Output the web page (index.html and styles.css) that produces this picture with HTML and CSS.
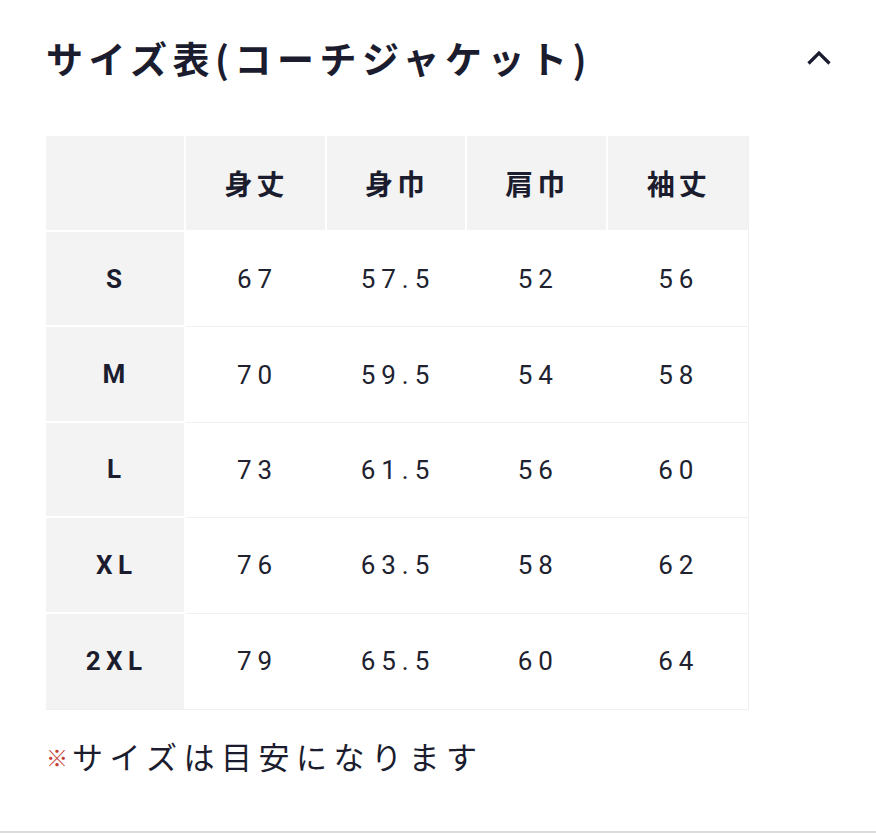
FILE: index.html
```html
<!DOCTYPE html>
<html lang="ja">
<head>
<meta charset="utf-8">
<title>サイズ表</title>
<link rel="stylesheet" href="styles.css">
</head>
<body>
<section class="size-guide">
  <div class="guide-head">
    <h2 class="guide-title">サイズ表(コーチジャケット)</h2>
    <svg class="chevron" width="26" height="16" viewBox="0 0 26 16" aria-hidden="true">
      <path d="M2.5 13.5 L13 3 L23.5 13.5" fill="none" stroke="#1b1d2f" stroke-width="3.2" stroke-linecap="butt" stroke-linejoin="miter"/>
    </svg>
  </div>
  <table class="size-table">
    <thead>
      <tr>
        <th class="corner"></th>
        <th>身丈</th>
        <th>身巾</th>
        <th>肩巾</th>
        <th>袖丈</th>
      </tr>
    </thead>
    <tbody>
      <tr><th>S</th><td>67</td><td>57.5</td><td>52</td><td>56</td></tr>
      <tr><th>M</th><td>70</td><td>59.5</td><td>54</td><td>58</td></tr>
      <tr><th>L</th><td>73</td><td>61.5</td><td>56</td><td>60</td></tr>
      <tr><th>XL</th><td>76</td><td>63.5</td><td>58</td><td>62</td></tr>
      <tr><th>2XL</th><td>79</td><td>65.5</td><td>60</td><td>64</td></tr>
    </tbody>
  </table>
  <p class="note"><span class="mark">※</span>サイズは目安になります</p>
</section>
<div class="divider"></div>
</body>
</html>
```

FILE: styles.css
```css
html, body {
  margin: 0;
  padding: 0;
  background: #ffffff;
}

body {
  font-family: "Noto Sans CJK JP", "Noto Sans", sans-serif;
  color: #1b1d2f;
  width: 876px;
  height: 833px;
  display: flex;
  flex-direction: column;
  overflow: hidden;
}

.size-guide {
  flex: 1;
  min-height: 0;
  padding: 0 44px 0 46px;
}

.guide-head {
  display: flex;
  align-items: center;
  justify-content: space-between;
  height: 118px;
}

.guide-title {
  margin: -2px 0 0 0;
  font-size: 37px;
  font-weight: 700;
  letter-spacing: 5.5px;
  line-height: 1;
  padding-left: 0;
}

.chevron {
  display: block;
  margin-top: -2px;
}

.size-table {
  margin-top: 18px;
  width: 703px;
  table-layout: fixed;
  border-collapse: separate;
  border-spacing: 0;
  border-right: 1px solid #f0f0f0;
  border-bottom: 1px solid #f0f0f0;
}

.size-table th,
.size-table td {
  padding: 0;
  text-align: center;
  vertical-align: middle;
  box-sizing: border-box;
}

.size-table thead th {
  background: #f3f3f3;
  font-size: 28px;
  font-weight: 700;
  letter-spacing: 4px;
  text-indent: 2px;
  border-right: 2px solid #ffffff;
  border-bottom: 2px solid #ffffff;
  height: 96px;
}

.size-table thead th:last-child {
  border-right: none;
}

.size-table tbody th {
  background: #f3f3f3;
  font-family: "Roboto", "Noto Sans", sans-serif;
  font-size: 26px;
  font-weight: 700;
  letter-spacing: 5.5px;
  text-indent: 3px;
  border-right: 2px solid #ffffff;
  border-bottom: 2px solid #ffffff;
  height: 95.4px;
}

.size-table tbody tr:last-child th {
  border-bottom: none;
}

.size-table td {
  font-family: "Roboto", "Noto Sans", sans-serif;
  font-size: 26px;
  font-weight: 400;
  color: #20222f;
  letter-spacing: 6px;
  text-indent: 2px;
  border-bottom: 1px solid #f0f0f0;
  height: 95.4px;
}

.size-table tbody tr:last-child td {
  border-bottom: none;
}

.note {
  margin: 26px 0 0 0;
  font-size: 31px;
  font-weight: 400;
  letter-spacing: 6.5px;
  line-height: 1.3;
}

.mark {
  color: #c43c36;
  font-size: 22px;
  letter-spacing: 4px;
  vertical-align: 3px;
}

.divider {
  flex: none;
  height: 2px;
  background: #dcdcdc;
}
```
